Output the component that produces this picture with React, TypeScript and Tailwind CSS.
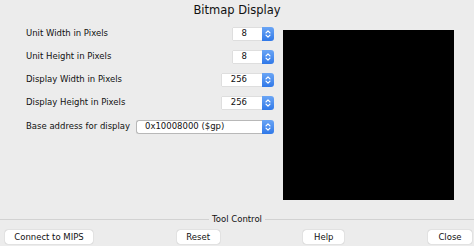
import React from 'react';

const font = { fontFamily: '"DejaVu Sans", Verdana, sans-serif' };

function Arrows() {
  return (
    <div className="flex h-[14px] w-[12px] items-center justify-center rounded-r-[3px] bg-gradient-to-b from-[#6aa5f5] to-[#2f78e8]">
      <svg width="6" height="10" viewBox="0 0 6 10" fill="none" stroke="white" strokeWidth="1.2" strokeLinecap="round" strokeLinejoin="round">
        <path d="M1 3.8 L3 1.8 L5 3.8" />
        <path d="M1 6.2 L3 8.2 L5 6.2" />
      </svg>
    </div>
  );
}

function Spinner({ value, width }: { value: string; width: string }) {
  return (
    <div className="flex items-center">
      <div className={`flex h-[12px] ${width} items-center justify-end bg-white pr-[15px] shadow-[0_0_1px_rgba(0,0,0,0.35)] text-[8.5px] leading-none text-[#111]`}>
        {value}
      </div>
      <Arrows />
    </div>
  );
}

function Row({ label, children }: { label: string; children: React.ReactNode }) {
  return (
    <div className="flex h-[23px] items-center justify-between">
      <span className="text-[8.5px] text-[#111]">{label}</span>
      {children}
    </div>
  );
}

function Btn({ label, w }: { label: string; w: string }) {
  return (
    <button className={`${w} h-[14px] rounded-[3px] bg-white text-[8.5px] leading-none text-[#111] shadow-[0_0_1px_rgba(0,0,0,0.4)]`}>
      {label}
    </button>
  );
}

export default function App() {
  return (
    <div className="flex h-[246px] w-[474px] flex-col overflow-hidden bg-[#ececec]" style={font}>
      <div className="flex h-[22px] items-center justify-center text-[11.5px] text-[#111]">Bitmap Display</div>
      <div className="flex h-[191px]">
        <div className="ml-[26px] w-[248px]">
          <Row label="Unit Width in Pixels"><Spinner value="8" width="w-[29px]" /></Row>
          <Row label="Unit Height in Pixels"><Spinner value="8" width="w-[29px]" /></Row>
          <Row label="Display Width in Pixels"><Spinner value="256" width="w-[40px]" /></Row>
          <Row label="Display Height in Pixels"><Spinner value="256" width="w-[40px]" /></Row>
          <div className="mt-[1px] flex h-[23px] items-center justify-between">
            <span className="text-[8.5px] text-[#111]">Base address for display</span>
            <div className="flex items-center">
              <div className="flex h-[14px] w-[126px] items-center border border-[#b8b8b8] border-r-0 rounded-l-[3px] bg-white pl-[8px] text-[8.5px] leading-none text-[#111]">
                0x10008000 ($gp)
              </div>
              <Arrows />
            </div>
          </div>
        </div>
        <div className="ml-[9px] mt-[8px] h-[170px] w-[171px] bg-black" />
      </div>
      <div className="flex h-[12px] items-center">
        <div className="h-px flex-1 bg-[#d2d2d2]" />
        <span className="px-[3px] text-[8.5px] leading-none text-[#111]">Tool Control</span>
        <div className="h-px flex-1 bg-[#d2d2d2]" />
      </div>
      <div className="mt-[5px] flex justify-between pl-[5px] pr-[2px]">
        <Btn label="Connect to MIPS" w="w-[88px]" />
        <Btn label="Reset" w="w-[43px]" />
        <Btn label="Help" w="w-[41px]" />
        <Btn label="Close" w="w-[44px]" />
      </div>
    </div>
  );
}
